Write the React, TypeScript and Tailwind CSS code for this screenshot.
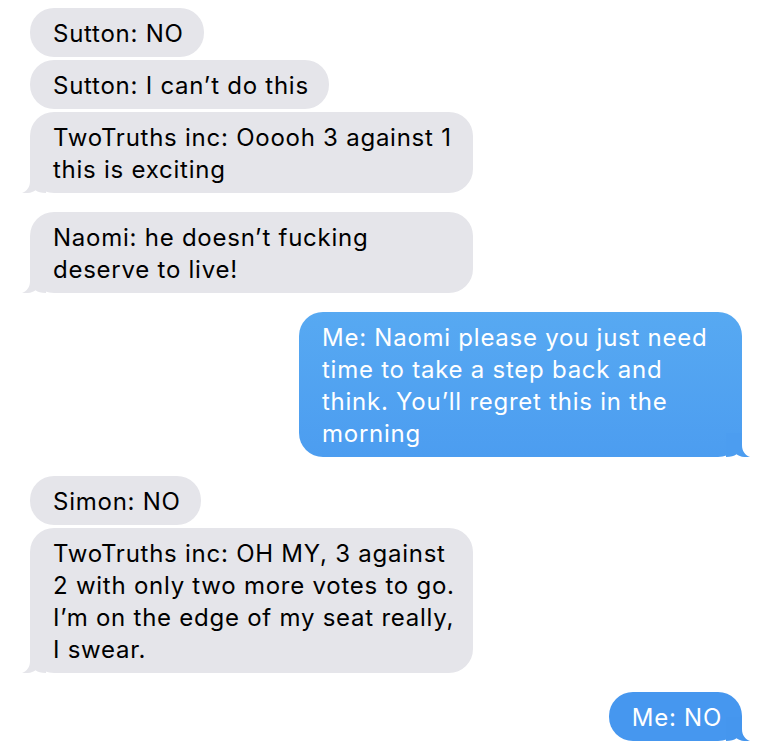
import React from "react";

type Msg = { lines: string[]; me?: boolean; tail?: boolean };

const msgs: Msg[] = [
  { lines: ["Sutton: NO"] },
  { lines: ["Sutton: I can\u2019t do this"] },
  { lines: ["TwoTruths inc: Ooooh 3 against 1", "this is exciting"], tail: true },
  { lines: ["Naomi: he doesn\u2019t fucking", "deserve to live!"], tail: true },
  {
    lines: ["Me: Naomi please you just need", "time to take a step back and", "think. You\u2019ll regret this in the", "morning"],
    me: true,
    tail: true,
  },
  { lines: ["Simon: NO"] },
  {
    lines: ["TwoTruths inc: OH MY, 3 against", "2 with only two more votes to go.", "I\u2019m on the edge of my seat really,", "I swear."],
    tail: true,
  },
  { lines: ["Me: NO"], me: true, tail: true },
];

function Tail({ me, color }: { me?: boolean; color: string }) {
  return (
    <svg
      width="24"
      height="24"
      viewBox="0 0 24 24"
      className={me ? "absolute bottom-0 -right-[8px]" : "absolute bottom-0 -left-[8px]"}
      style={{ transform: me ? "scaleX(-1)" : undefined }}
    >
      <path d="M8 0 V12 C8 18 5 22 0 24 C6 24.6 10.5 23.4 13.5 21.2 C16 23 19 24 24 24 V0 Z" fill={color} />
    </svg>
  );
}

function Bubble({ m, idx }: { m: Msg; idx: number }) {
  const multi = m.lines.length > 1;
  const bottomColor = idx === 7 ? "#4596ee" : m.me ? "#4c9df0" : "#e5e5ea";
  return (
    <div className={m.me ? "flex justify-end pr-[30px]" : "flex justify-start pl-[30px]"}>
      <div
        className={
          "relative rounded-[24px] pl-[23px] pr-[20px] pt-[10px] pb-[7px] text-[24px] tracking-[0.75px] leading-[32px] whitespace-nowrap " +
          (multi ? "w-[443px] " : "") +
          (m.me
            ? idx === 7
              ? "text-white bg-[#4697ef]"
              : "text-white bg-[linear-gradient(#57a9f2,#4c9df0)]"
            : "text-black bg-[#e5e5ea]")
        }
      >
        {m.tail && <Tail me={m.me} color={bottomColor} />}
        <div className="relative">
          {m.lines.map((l, i) => (
            <div key={i}>{l}</div>
          ))}
        </div>
      </div>
    </div>
  );
}

export default function App() {
  return (
    <div
      className="w-[772px] h-[754px] bg-white overflow-hidden pt-[8px]"
      style={{ fontFamily: "Inter, 'Liberation Sans', sans-serif" }}
    >
      <div className="flex flex-col">
        {msgs.map((m, i) => {
          const prev = msgs[i - 1];
          const mt = i === 0 ? "" : prev.tail ? "mt-[19px]" : "mt-[3px]";
          return (
            <div key={i} className={mt}>
              <Bubble m={m} idx={i} />
            </div>
          );
        })}
      </div>
    </div>
  );
}
